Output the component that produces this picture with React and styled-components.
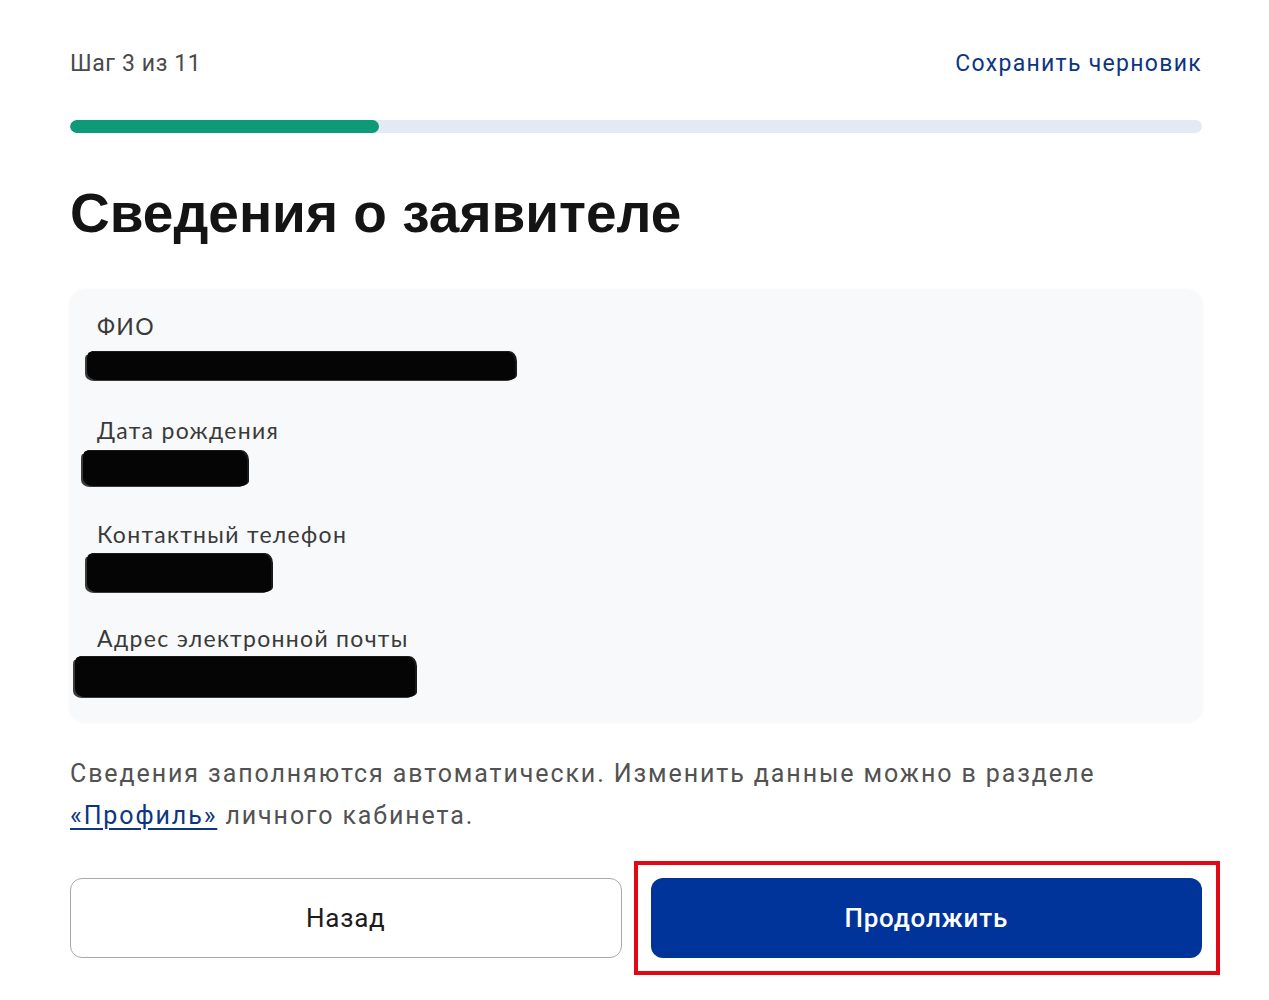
import React from 'react'
import styled, { createGlobalStyle } from 'styled-components'

const TOTAL_STEPS = 11
const CURRENT_STEP = 3

const GlobalStyle = createGlobalStyle`
  html, body {
    margin: 0;
    padding: 0;
    background: #ffffff;
  }
  body {
    font-family: Roboto, "Liberation Sans", sans-serif;
    color: #1f1f1f;
  }
`

const Page = styled.div`
  width: 1132px;
  padding: 46px 0 42px 70px;
  box-sizing: content-box;
`
const TopRow = styled.div`
  display: flex;
  justify-content: space-between;
  align-items: center;
  height: 34px;
`
const StepText = styled.span`
  font-family: Roboto, sans-serif;
  font-size: 23px;
  color: #4a4a4a;
  letter-spacing: 0.6px;
`
const DraftLink = styled.a`
  font-family: Roboto, sans-serif;
  font-size: 23px;
  color: #0d3580;
  text-decoration: none;
  letter-spacing: 1.3px;
`
const Track = styled.div`
  margin-top: 40px;
  height: 13px;
  border-radius: 7px;
  background: #e3eaf3;
  overflow: hidden;
`
const Fill = styled.div`
  height: 100%;
  border-radius: 7px;
  background: #0d9a78;
`
const Title = styled.h1`
  margin: 50px 0 0;
  font-family: "Liberation Sans", Arial, sans-serif;
  font-weight: 700;
  font-size: 55px;
  line-height: 60px;
  color: #141414;
`
const Card = styled.div`
  margin-top: 47px;
  height: 432px;
  box-sizing: border-box;
  padding: 22px 27px 0;
  border-radius: 16px;
  background: #f8f9fb;
  box-shadow: 0 0 4px rgba(0, 0, 0, 0.06);
  display: flex;
  flex-direction: column;
  gap: 28px;
`
const Field = styled.div`
  display: flex;
  flex-direction: column;
`
const Label = styled.span`
  font-family: Lato, "Open Sans", sans-serif;
  font-size: 23px;
  line-height: 28px;
  color: #3a3a3a;
  letter-spacing: 1.3px;
`
const BarSlot = styled.div`
  height: 48px;
`
const Redacted = styled.div`
  height: ${p => p.h}px;
  width: ${p => p.w}px;
  margin: ${p => p.y}px 0 0 ${p => p.x}px;
  background: #050505;
  border-radius: 3px 8px 5px 10px / 6px 10px 4px 8px;
  box-shadow: -3px 2px 0 -1px #3a3a3a, 2px -1px 0 0 #1a1a1a;
`
const Note = styled.p`
  margin: 31px 0 0;
  font-family: Roboto, sans-serif;
  font-size: 25px;
  line-height: 42px;
  color: #525252;
  letter-spacing: 1.9px;
`
const ProfileLink = styled.a`
  color: #0d3580;
  text-decoration: underline;
  text-underline-offset: 4px;
  text-decoration-thickness: 1.5px;
`
const Actions = styled.div`
  margin-top: 41px;
  display: grid;
  grid-template-columns: 1fr 1fr;
  gap: 29px;
`
const Highlight = styled.div`
  position: relative;
  display: flex;

  &::after {
    content: '';
    position: absolute;
    inset: -17px -18px -17px -17px;
    border: 4px solid #e30613;
    pointer-events: none;
  }
`
const Button = styled.button`
  width: 100%;
  height: 80px;
  border-radius: 12px;
  font-family: Roboto, sans-serif;
  font-size: 26px;
  letter-spacing: 0.8px;
  cursor: pointer;
  border: ${p => (p.primary ? 'none' : '1px solid #a9a9a9')};
  background: ${p => (p.primary ? '#00349a' : '#ffffff')};
  color: ${p => (p.primary ? '#ffffff' : '#1c1c1c')};
  font-weight: ${p => (p.primary ? 500 : 400)};
`

const fields = [
  { label: 'ФИО', w: 428, h: 28, x: -10, y: 12 },
  { label: 'Дата рождения', w: 164, h: 35, x: -14, y: 7 },
  { label: 'Контактный телефон', w: 184, h: 38, x: -10, y: 6 },
  { label: 'Адрес электронной почты', w: 340, h: 40, x: -22, y: 5 }
]

export default function App() {
  const progress = (CURRENT_STEP / TOTAL_STEPS) * 100
  return (
    <>
      <GlobalStyle />
      <Page>
        <TopRow>
          <StepText>Шаг {CURRENT_STEP} из {TOTAL_STEPS}</StepText>
          <DraftLink href="#">Сохранить черновик</DraftLink>
        </TopRow>
        <Track>
          <Fill style={{ width: `${progress}%` }} />
        </Track>
        <Title>Сведения о заявителе</Title>
        <Card>
          {fields.map(f => (
            <Field key={f.label}>
              <Label>{f.label}</Label>
              <BarSlot>
                <Redacted w={f.w} h={f.h} x={f.x} y={f.y} />
              </BarSlot>
            </Field>
          ))}
        </Card>
        <Note>
          Сведения заполняются автоматически. Изменить данные можно в разделе{' '}
          <ProfileLink href="#">«Профиль»</ProfileLink> личного кабинета.
        </Note>
        <Actions>
          <Button>Назад</Button>
          <Highlight>
            <Button primary>Продолжить</Button>
          </Highlight>
        </Actions>
      </Page>
    </>
  )
}
